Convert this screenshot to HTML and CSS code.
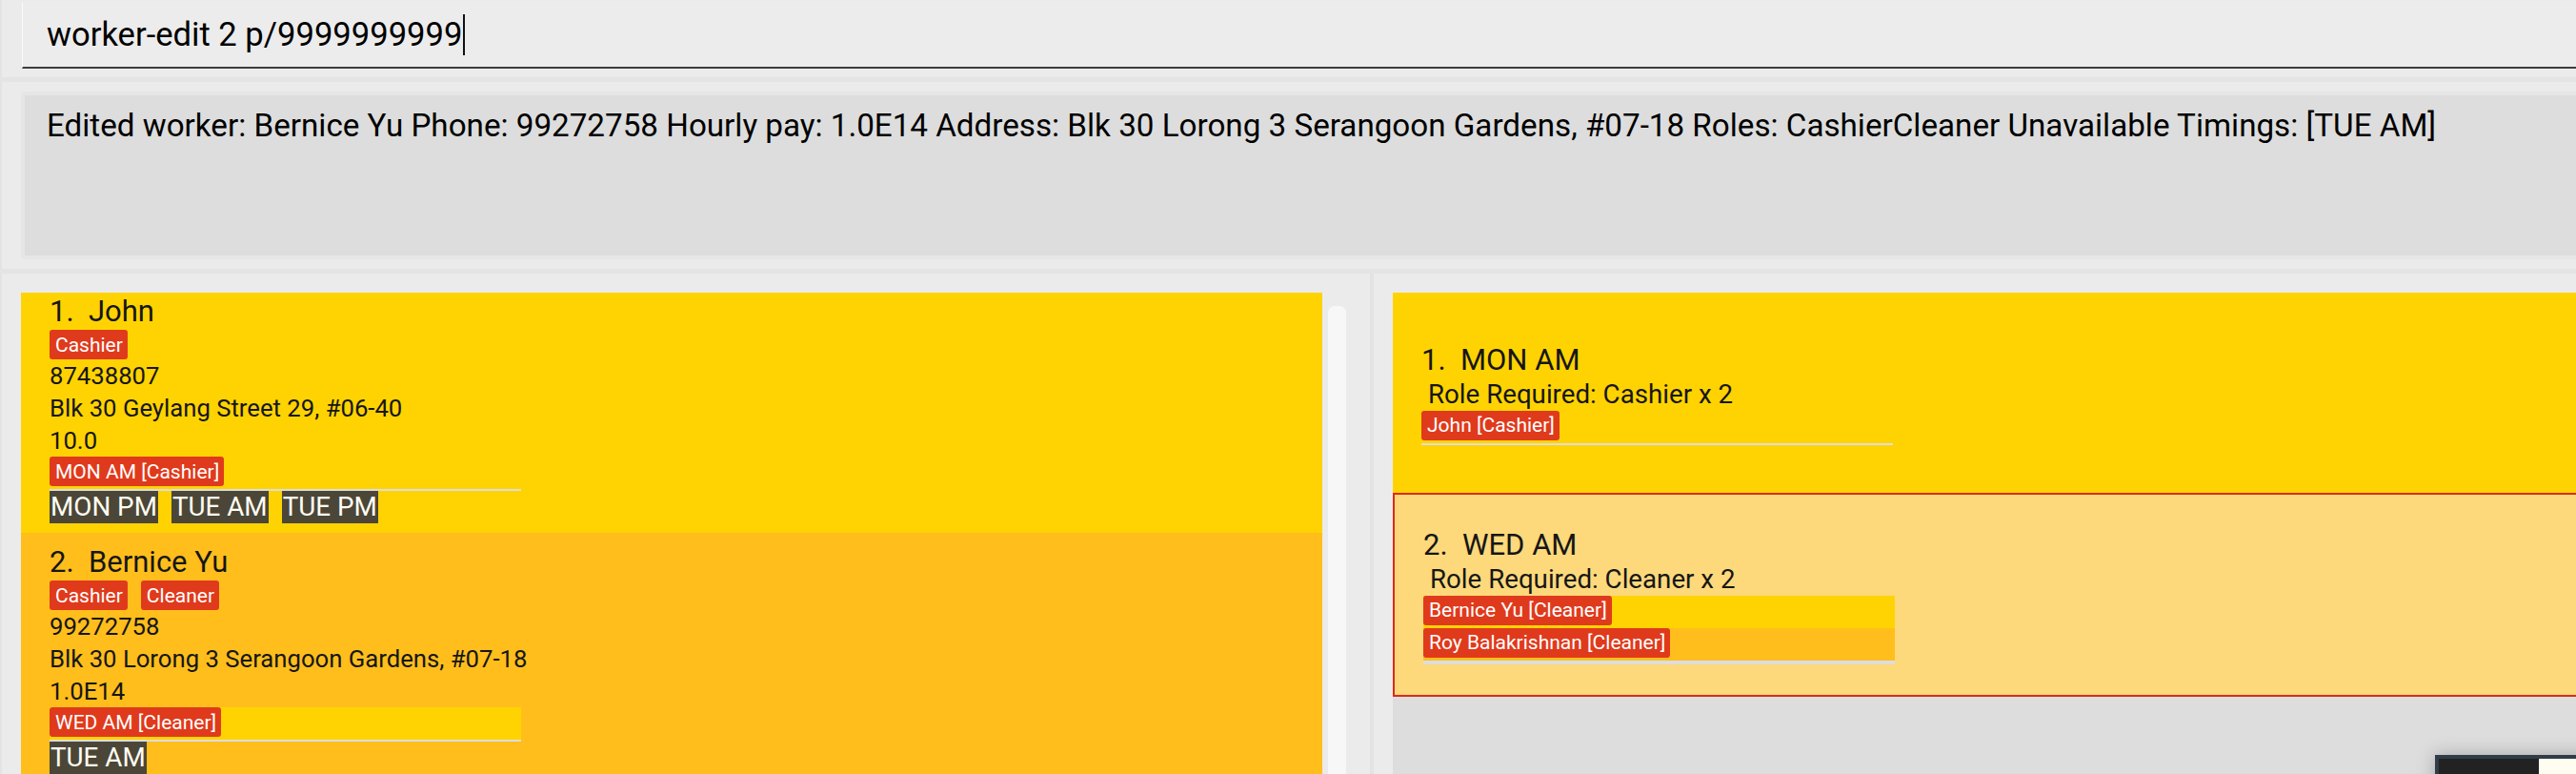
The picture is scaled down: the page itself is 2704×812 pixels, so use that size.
FILE: index.html
```html
<!DOCTYPE html>
<html>
<head>
<meta charset="utf-8">
<link rel="stylesheet" href="styles.css">
</head>
<body>
<div class="app">
  <div class="command-band">
    <div class="command-field"><span class="command-text">worker-edit 2 p/9999999999</span><span class="caret"></span></div>
  </div>
  <div class="band-sep"></div>
  <div class="result-band">
    <div class="result-frame">
      <div class="result-box">Edited worker: Bernice Yu Phone: 99272758 Hourly pay: 1.0E14 Address: Blk 30 Lorong 3 Serangoon Gardens, #07-18 Roles: CashierCleaner Unavailable Timings: [TUE AM]</div>
    </div>
  </div>
  <div class="band-sep"></div>
  <div class="lists">
    <div class="worker-panel">
      <div class="list-viewport">
        <div class="list-scroll">
          <div class="worker-card yellow">
            <div class="name">1.&nbsp; John</div>
            <div class="chips"><span class="chip">Cashier</span></div>
            <div class="field">87438807</div>
            <div class="field">Blk 30 Geylang Street 29, #06-40</div>
            <div class="field">10.0</div>
            <div class="mini-list">
              <div class="mini-row yellow"><span class="chip">MON AM [Cashier]</span></div>
            </div>
            <div class="labels"><span class="label">MON PM</span><span class="label">TUE AM</span><span class="label">TUE PM</span></div>
          </div>
          <div class="worker-card amber">
            <div class="name">2.&nbsp; Bernice Yu</div>
            <div class="chips"><span class="chip">Cashier</span><span class="chip">Cleaner</span></div>
            <div class="field">99272758</div>
            <div class="field">Blk 30 Lorong 3 Serangoon Gardens, #07-18</div>
            <div class="field">1.0E14</div>
            <div class="mini-list">
              <div class="mini-row yellow"><span class="chip">WED AM [Cleaner]</span></div>
            </div>
            <div class="labels"><span class="label">TUE AM</span></div>
          </div>
        </div>
      </div>
      <div class="scrollbar"><div class="thumb"></div></div>
    </div>
    <div class="divider"></div>
    <div class="shift-panel">
      <div class="shift-list">
        <div class="shift-card yellow">
          <div class="shift-content">
            <div class="name">1.&nbsp; MON AM</div>
            <div class="role">Role Required: Cashier x 2</div>
            <div class="mini-list">
              <div class="mini-row yellow"><span class="chip">John [Cashier]</span></div>
            </div>
          </div>
        </div>
        <div class="shift-card selected">
          <div class="shift-content">
            <div class="name">2.&nbsp; WED AM</div>
            <div class="role">Role Required: Cleaner x 2</div>
            <div class="mini-list two">
              <div class="mini-row yellow"><span class="chip">Bernice Yu [Cleaner]</span></div>
              <div class="mini-row amber"><span class="chip">Roy Balakrishnan [Cleaner]</span></div>
            </div>
          </div>
        </div>
      </div>
    </div>
  </div>
  <div class="other-window"><div class="ow-dark"></div><div class="ow-light"></div></div>
</div>
</body>
</html>
```
FILE: styles.css
```css
* { box-sizing: border-box; }
html, body { margin: 0; padding: 0; }
body {
  width: 2704px; height: 812px; overflow: hidden;
  background: #ebebeb;
  font-family: Roboto, "Liberation Sans", Arial, sans-serif;
  color: #161616;
}
.app {
  position: relative; width: 2704px; height: 812px; overflow: hidden;
  box-shadow: inset 2px 0 0 #e3e3e3;
}

.command-band { height: 81px; padding: 2px 0 0 23px; }
.command-field {
  height: 70px; background: #ececec;
  border-left: 1px solid #fafafa;
  border-bottom: 2px solid #3d3d3d;
  display: flex; align-items: center;
  padding-left: 25px;
  font-size: 34.6px; white-space: nowrap; color: #000;
}
.caret { display: inline-block; width: 2px; height: 43px; background: #111; margin-left: 1px; }

.band-sep { height: 5px; background: #e4e4e4; }
.result-band { height: 196px; padding: 10px 0 10px 22px; }
.result-frame { height: 176px; padding: 4px 0 4px 4px; background: #e6e6e6; }
.result-box {
  height: 168px; background: #dddddd;
  padding: 12px 0 0 23px;
  font-size: 33.2px; white-space: nowrap; color: #000;
}

.lists { display: flex; height: 526px; }
.worker-panel { width: 1438px; display: flex; padding: 20px 0 0 22px; }
.list-viewport { width: 1366px; height: 506px; overflow: hidden; }
.list-scroll { margin-top: -11px; }
.scrollbar { width: 19px; margin-left: 6px; padding-top: 14px; }
.thumb { height: 600px; background: #f7f7f7; border-radius: 7px 7px 0 0; }
.divider { width: 4px; background: #e3e3e3; }
.shift-panel { flex: 1; padding: 20px 0 0 20px; }
.shift-list { height: 506px; background: #dddddd; }

.yellow { background: #ffd302; }
.amber { background: #ffbe1c; }

.worker-card { padding: 11px 0 10px 30px; }
.name { font-size: 31px; line-height: 39px; white-space: pre; }
.chips { display: flex; gap: 14px; height: 31px; }
.chip {
  display: inline-flex; align-items: center;
  height: 31px; padding: 0 5px 0 6px;
  background: #e03a1c; color: #fff;
  border-radius: 3px;
  font-size: 21px; white-space: nowrap;
}
.field { font-size: 25.7px; line-height: 34px; white-space: nowrap; }
.mini-list { width: 495px; border-bottom: 2px solid #dddddd; }
.mini-row { height: 34px; }
.mini-list.two { border-bottom-width: 4px; }
.labels { display: flex; gap: 14px; }
.label {
  height: 34px; padding: 0 1px; background: #4b4637; color: #fffdf2;
  font-size: 27.8px; line-height: 34px; white-space: nowrap;
}

.shift-card { height: 210px; display: flex; flex-direction: column; justify-content: center; padding-left: 30px; }
.shift-card.selected { height: 214px; background: #fdd97b; border: 2px solid #dc2a1a; border-right: none; padding-left: 30px; }
.role { font-size: 27.7px; line-height: 34px; padding-left: 7px; white-space: nowrap; }

.other-window {
  position: absolute; left: 2556px; top: 792px; width: 300px; height: 100px;
  background: #313c46; padding: 4px; display: flex;
  box-shadow: 0 0 18px rgba(0,0,0,0.25);
}
.ow-dark { width: 105px; background: #222; }
.ow-light { flex: 1; background: #fffdf0; }
```
